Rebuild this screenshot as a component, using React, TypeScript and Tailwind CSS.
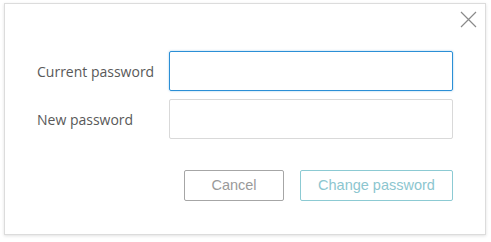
import React from "react";

export default function App() {
  return (
    <div className="w-[491px] h-[242px] bg-white pt-[3px] pl-[4px]">
      <div className="relative w-[482px] h-[232px] bg-white border border-[#dcdcdc] shadow-[0_1px_3px_rgba(0,0,0,0.12)]">
        <button className="absolute right-[8px] top-[7px] w-[17px] h-[17px] flex items-center justify-center">
          <svg width="17" height="17" viewBox="0 0 17 17">
            <path d="M1 1 L16 16 M16 1 L1 16" stroke="#8a8a8a" strokeWidth="1.2" fill="none" />
          </svg>
        </button>
        <div className="flex flex-col gap-[8px] pt-[47px] pl-[32px]">
          <div className="flex items-center">
            <label className="w-[132px] text-[14px] text-[#595959] font-['Open_Sans',sans-serif]">Current password</label>
            <input
              type="password"
              className="w-[284px] h-[40px] rounded-[2px] border border-[#2b8fd6] shadow-[0_0_2px_rgba(43,143,214,0.5)] outline-none"
            />
          </div>
          <div className="flex items-center">
            <label className="w-[132px] text-[14px] text-[#595959] font-['Open_Sans',sans-serif]">New password</label>
            <input
              type="password"
              className="w-[284px] h-[40px] rounded-[2px] border border-[#d9d9d9] outline-none"
            />
          </div>
        </div>
        <div className="flex justify-end gap-[16px] pr-[32px] mt-[31px]">
          <button className="w-[100px] h-[31px] rounded-[2px] border border-[#a6a6a6] text-[14.5px] text-[#9a9a9a] font-['Liberation_Sans',sans-serif]">
            Cancel
          </button>
          <button className="w-[153px] h-[31px] rounded-[2px] border border-[#8ccad3] text-[14.5px] text-[#8cc6cf] font-['Liberation_Sans',sans-serif]">
            Change password
          </button>
        </div>
      </div>
    </div>
  );
}
